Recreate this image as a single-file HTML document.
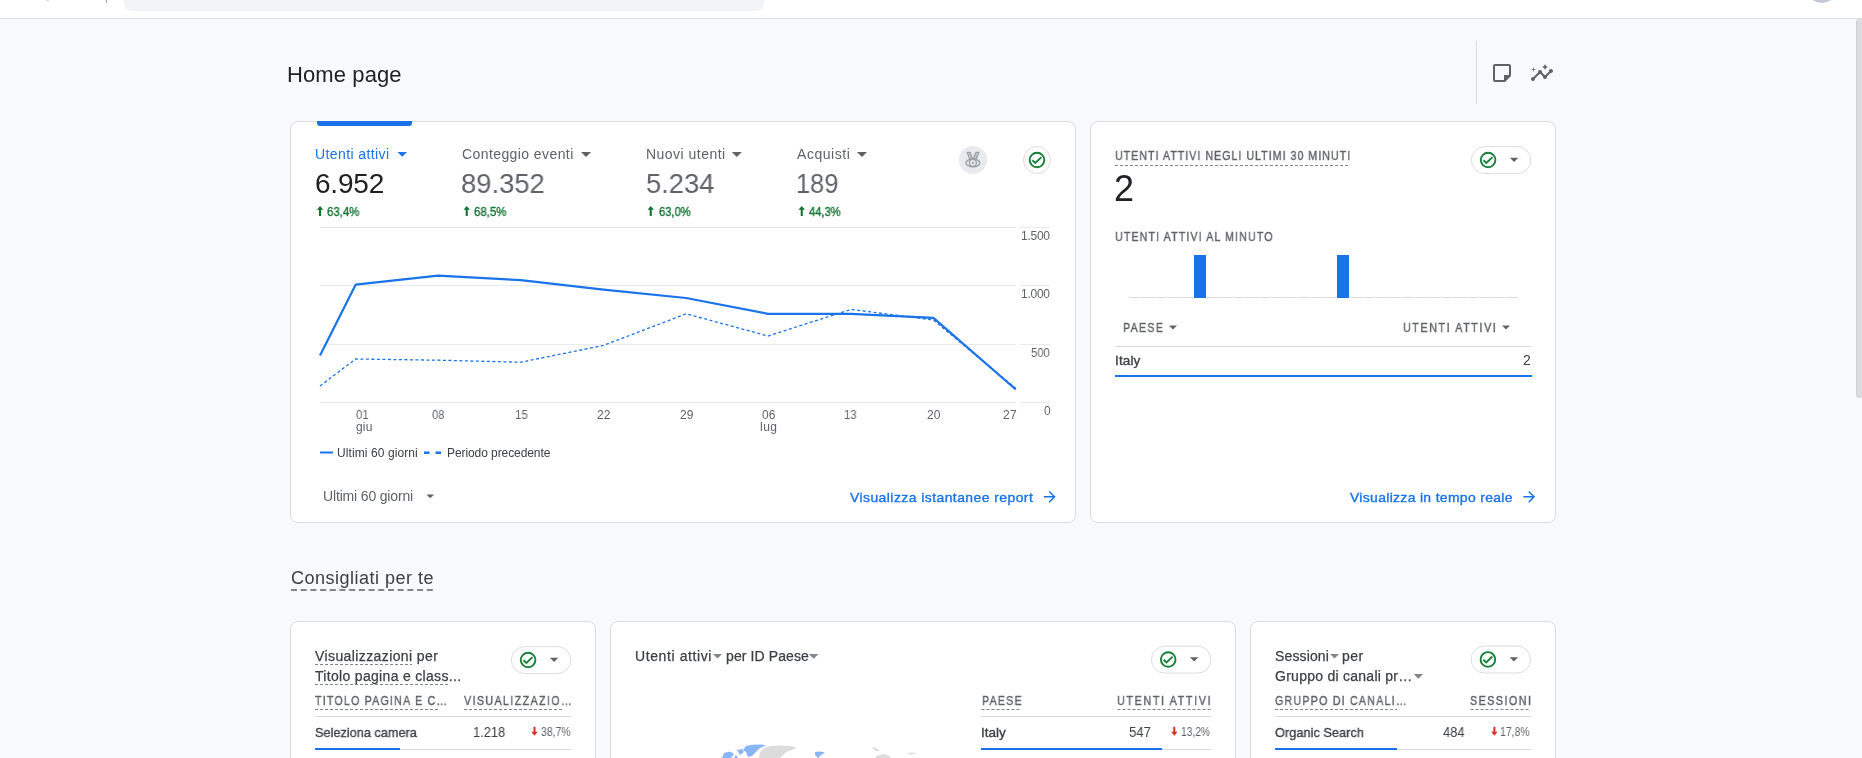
<!DOCTYPE html>
<html><head><meta charset="utf-8"><style>
*{box-sizing:border-box;margin:0;padding:0}
html,body{width:1862px;height:758px;overflow:hidden;background:#f8f9fa;font-family:"Liberation Sans",sans-serif;color:#202124}
.a{position:absolute}
.t{position:absolute;white-space:nowrap;line-height:1;will-change:transform}
#top{position:absolute;left:0;top:0;width:1862px;height:19px;background:#fff;border-bottom:1px solid #dadce0}
#search{position:absolute;left:124px;top:-30px;width:640px;height:41px;background:#f1f3f4;border-radius:8px}
#avatar{position:absolute;left:1806px;top:-29px;width:32px;height:32px;border-radius:50%;background:#c2cad3}
#sb{position:absolute;left:1856px;top:19px;width:10px;height:379px;background:#dadce0;border-radius:4px;box-shadow:inset 1px 0 0 #cdced2}
.card{position:absolute;background:#fff;border:1px solid #dadce0;border-radius:8px}
svg{position:absolute;left:0;top:0}
</style></head><body>
<div id="top"><div id="search"></div><div id="avatar"></div>
<div class="a" style="left:106px;top:0;width:1px;height:3px;background:#9aa0a6"></div><div class="a" style="left:46px;top:0;width:3px;height:1px;background:#dadce0"></div></div>
<div id="sb"></div>
<div class="a" style="left:1476px;top:41px;width:1px;height:63px;background:#dadce0"></div>
<div class="card" style="left:290px;top:121px;width:786px;height:402px"></div>
<div class="a" style="left:317px;top:121px;width:95px;height:5px;background:#1a73e8;border-radius:0 0 3px 3px"></div>
<div class="card" style="left:1090px;top:121px;width:466px;height:402px"></div>
<div class="a" style="left:1115px;top:346px;width:416px;height:1px;background:#dadce0"></div>
<div class="a" style="left:1115px;top:375px;width:417px;height:2px;background:#1a73e8"></div>
<div class="card" style="left:290px;top:621px;width:306px;height:200px"></div>
<div class="card" style="left:610px;top:621px;width:626px;height:200px"></div>
<div class="card" style="left:1250px;top:621px;width:306px;height:200px"></div>
<div class="a" style="left:315px;top:716px;width:256px;height:1px;background:#dadce0"></div>
<div class="a" style="left:315px;top:749px;width:256px;height:1px;background:#dadce0"></div>
<div class="a" style="left:315px;top:748px;width:85px;height:2px;background:#1a73e8"></div>
<div class="a" style="left:981px;top:716px;width:230px;height:1px;background:#dadce0"></div>
<div class="a" style="left:981px;top:749px;width:230px;height:1px;background:#dadce0"></div>
<div class="a" style="left:981px;top:748px;width:181px;height:2px;background:#1a73e8"></div>
<div class="a" style="left:1275px;top:716px;width:256px;height:1px;background:#dadce0"></div>
<div class="a" style="left:1275px;top:749px;width:256px;height:1px;background:#dadce0"></div>
<div class="a" style="left:1275px;top:748px;width:122px;height:2px;background:#1a73e8"></div>

<div class="t" id="home" style="left:287.2px;top:64.38px;font-size:22px;color:#202124;letter-spacing:0.103px;">Home page</div>
<div class="t" id="m1" style="left:315.2px;top:147.15px;font-size:14px;color:#1a73e8;letter-spacing:0.401px;">Utenti attivi</div>
<div class="t" id="m2" style="left:462.2px;top:147.15px;font-size:14px;color:#5f6368;letter-spacing:0.413px;">Conteggio eventi</div>
<div class="t" id="m3" style="left:645.8px;top:147.15px;font-size:14px;color:#5f6368;letter-spacing:0.473px;">Nuovi utenti</div>
<div class="t" id="m4" style="left:796.8px;top:147.15px;font-size:14px;color:#5f6368;letter-spacing:0.544px;">Acquisti</div>
<div class="t" id="v1" style="left:315.2px;top:169.7px;font-size:28px;color:#202124;letter-spacing:-0.2px;">6.952</div>
<div class="t" id="v2" style="left:461.2px;top:169.7px;font-size:28px;color:#5f6368;transform:scaleX(0.9786);transform-origin:0 0;">89.352</div>
<div class="t" id="v3" style="left:645.6px;top:169.7px;font-size:28px;color:#5f6368;transform:scaleX(0.9768);transform-origin:0 0;">5.234</div>
<div class="t" id="v4" style="left:796.2px;top:169.7px;font-size:28px;color:#5f6368;transform:scaleX(0.9054);transform-origin:0 0;">189</div>
<div class="t" id="p1" style="left:327.0px;top:205.84px;font-size:12px;color:#137333;-webkit-text-stroke:0.35px currentColor;transform:scaleX(0.953);transform-origin:0 0;">63,4%</div>
<div class="t" id="p2" style="left:474.0px;top:205.84px;font-size:12px;color:#137333;-webkit-text-stroke:0.35px currentColor;transform:scaleX(0.953);transform-origin:0 0;">68,5%</div>
<div class="t" id="p3" style="left:658.6px;top:205.84px;font-size:12px;color:#137333;-webkit-text-stroke:0.35px currentColor;transform:scaleX(0.9298);transform-origin:0 0;">63,0%</div>
<div class="t" id="p4" style="left:809.2px;top:205.84px;font-size:12px;color:#137333;-webkit-text-stroke:0.35px currentColor;transform:scaleX(0.9295);transform-origin:0 0;">44,3%</div>
<div class="t" id="y1" style="left:1021.0px;top:229.54px;font-size:12px;color:#5f6368;letter-spacing:-0.25px;">1.500</div>
<div class="t" id="y2" style="left:1021.0px;top:288.24px;font-size:12px;color:#5f6368;letter-spacing:-0.25px;">1.000</div>
<div class="t" id="y3" style="left:1031.2px;top:346.84px;font-size:12px;color:#5f6368;transform:scaleX(0.9391);transform-origin:0 0;">500</div>
<div class="t" id="y4" style="left:1043.8px;top:404.84px;font-size:12px;color:#5f6368;">0</div>
<div class="t" id="x1" style="left:356.2px;top:408.64px;font-size:12px;color:#5f6368;transform:scaleX(0.9396);transform-origin:0 0;">01</div>
<div class="t" id="x1b" style="left:356.2px;top:420.84px;font-size:12px;color:#5f6368;letter-spacing:0.2px;">giu</div>
<div class="t" id="x2" style="left:432.2px;top:408.64px;font-size:12px;color:#5f6368;transform:scaleX(0.9245);transform-origin:0 0;">08</div>
<div class="t" id="x3" style="left:515.0px;top:408.64px;font-size:12px;color:#5f6368;transform:scaleX(0.9548);transform-origin:0 0;">15</div>
<div class="t" id="x4" style="left:596.6px;top:408.64px;font-size:12px;color:#5f6368;transform:scaleX(0.9885);transform-origin:0 0;">22</div>
<div class="t" id="x5" style="left:680.0px;top:408.64px;font-size:12px;color:#5f6368;">29</div>
<div class="t" id="x6" style="left:761.6px;top:408.64px;font-size:12px;color:#5f6368;transform:scaleX(0.971);transform-origin:0 0;">06</div>
<div class="t" id="x6b" style="left:760.2px;top:420.84px;font-size:12px;color:#5f6368;letter-spacing:0.5px;">lug</div>
<div class="t" id="x7" style="left:844.4px;top:408.64px;font-size:12px;color:#5f6368;transform:scaleX(0.9399);transform-origin:0 0;">13</div>
<div class="t" id="x8" style="left:926.8px;top:408.64px;font-size:12px;color:#5f6368;transform:scaleX(0.9706);transform-origin:0 0;">20</div>
<div class="t" id="x9" style="left:1002.8px;top:408.64px;font-size:12px;color:#5f6368;letter-spacing:0.4px;">27</div>
<div class="t" id="leg1" style="left:336.8px;top:447.34px;font-size:12px;color:#3c4043;letter-spacing:0.093px;">Ultimi 60 giorni</div>
<div class="t" id="leg2" style="left:447.0px;top:447.34px;font-size:12px;color:#3c4043;letter-spacing:-0.082px;">Periodo precedente</div>
<div class="t" id="dd" style="left:322.8px;top:488.65px;font-size:14px;color:#5f6368;letter-spacing:-0.161px;">Ultimi 60 giorni</div>
<div class="t" id="lnk1" style="left:849.6px;top:490.5px;font-size:13px;color:#1a73e8;-webkit-text-stroke:0.35px currentColor;letter-spacing:0.422px;transform:scaleX(1.07);transform-origin:0 0;">Visualizza istantanee report</div>
<div class="t" id="rt1" style="left:1115.0px;top:149.4px;font-size:13px;color:#5f6368;-webkit-text-stroke:0.4px currentColor;letter-spacing:1.233px;transform:scaleX(0.82);transform-origin:0 0;">UTENTI ATTIVI NEGLI ULTIMI 30 MINUTI</div>
<div class="t" id="rt2" style="left:1114.2px;top:171.03px;font-size:36px;color:#202124;">2</div>
<div class="t" id="rt3" style="left:1115.0px;top:230.3px;font-size:13px;color:#5f6368;-webkit-text-stroke:0.4px currentColor;letter-spacing:1.355px;transform:scaleX(0.82);transform-origin:0 0;">UTENTI ATTIVI AL MINUTO</div>
<div class="t" id="rt4" style="left:1123.0px;top:320.6px;font-size:13px;color:#5f6368;-webkit-text-stroke:0.4px currentColor;letter-spacing:1.542px;transform:scaleX(0.82);transform-origin:0 0;">PAESE</div>
<div class="t" id="rt5" style="left:1403.0px;top:320.6px;font-size:13px;color:#5f6368;-webkit-text-stroke:0.4px currentColor;letter-spacing:1.986px;transform:scaleX(0.82);transform-origin:0 0;">UTENTI ATTIVI</div>
<div class="t" id="rt6" style="left:1114.6px;top:353.77px;font-size:13.5px;color:#3c4043;-webkit-text-stroke:0.35px currentColor;letter-spacing:0.15px;">Italy</div>
<div class="t" id="rt7" style="left:1523.0px;top:353.35px;font-size:14px;color:#3c4043;">2</div>
<div class="t" id="lnk2" style="left:1350.0px;top:490.5px;font-size:13px;color:#1a73e8;-webkit-text-stroke:0.35px currentColor;letter-spacing:0.314px;transform:scaleX(1.07);transform-origin:0 0;">Visualizza in tempo reale</div>
<div class="t" id="cons" style="left:291.0px;top:569.06px;font-size:18px;color:#3c4043;letter-spacing:0.496px;">Consigliati per te</div>
<div class="t" id="a1" style="left:315.2px;top:649.25px;font-size:14px;color:#3c4043;-webkit-text-stroke:0.25px currentColor;letter-spacing:0.397px;">Visualizzazioni per</div>
<div class="t" id="a2" style="left:315.2px;top:669.35px;font-size:14px;color:#3c4043;-webkit-text-stroke:0.25px currentColor;letter-spacing:0.315px;">Titolo pagina e class...</div>
<div class="t" id="a3" style="left:315.0px;top:693.5px;font-size:13px;color:#5f6368;-webkit-text-stroke:0.4px currentColor;letter-spacing:1.47px;transform:scaleX(0.82);transform-origin:0 0;">TITOLO PAGINA E C…</div>
<div class="t" id="a4" style="left:464.0px;top:693.5px;font-size:13px;color:#5f6368;-webkit-text-stroke:0.4px currentColor;letter-spacing:1.71px;transform:scaleX(0.82);transform-origin:0 0;">VISUALIZZAZIO…</div>
<div class="t" id="a5" style="left:315.2px;top:725.77px;font-size:13.5px;color:#3c4043;-webkit-text-stroke:0.35px currentColor;transform:scaleX(0.9431);transform-origin:0 0;">Seleziona camera</div>
<div class="t" id="a6" style="left:473.0px;top:725.25px;font-size:14px;color:#3c4043;transform:scaleX(0.9186);transform-origin:0 0;">1.218</div>
<div class="t" id="a7" style="left:541.0px;top:725.94px;font-size:12px;color:#5f6368;transform:scaleX(0.8717);transform-origin:0 0;">38,7%</div>
<div class="t" id="b1" style="left:635.4px;top:649.05px;font-size:14px;color:#3c4043;-webkit-text-stroke:0.25px currentColor;letter-spacing:0.601px;">Utenti attivi</div>
<div class="t" id="b2" style="left:725.6px;top:649.05px;font-size:14px;color:#3c4043;-webkit-text-stroke:0.25px currentColor;letter-spacing:0.108px;">per ID Paese</div>
<div class="t" id="b3" style="left:982.0px;top:693.5px;font-size:13px;color:#5f6368;-webkit-text-stroke:0.4px currentColor;letter-spacing:1.497px;transform:scaleX(0.82);transform-origin:0 0;">PAESE</div>
<div class="t" id="b4" style="left:1117.0px;top:693.5px;font-size:13px;color:#5f6368;-webkit-text-stroke:0.4px currentColor;letter-spacing:2.069px;transform:scaleX(0.82);transform-origin:0 0;">UTENTI ATTIVI</div>
<div class="t" id="b5" style="left:980.8px;top:725.77px;font-size:13.5px;color:#3c4043;-webkit-text-stroke:0.35px currentColor;">Italy</div>
<div class="t" id="b6" style="left:1129.4px;top:725.35px;font-size:14px;color:#3c4043;transform:scaleX(0.9399);transform-origin:0 0;">547</div>
<div class="t" id="b7" style="left:1181.0px;top:725.94px;font-size:12px;color:#5f6368;transform:scaleX(0.8515);transform-origin:0 0;">13,2%</div>
<div class="t" id="c1" style="left:1275.0px;top:649.05px;font-size:14px;color:#3c4043;-webkit-text-stroke:0.25px currentColor;letter-spacing:0.142px;">Sessioni</div>
<div class="t" id="c2" style="left:1341.7px;top:649.05px;font-size:14px;color:#3c4043;-webkit-text-stroke:0.25px currentColor;letter-spacing:0.5px;">per</div>
<div class="t" id="c3" style="left:1275.0px;top:669.05px;font-size:14px;color:#3c4043;-webkit-text-stroke:0.25px currentColor;letter-spacing:0.263px;">Gruppo di canali pr…</div>
<div class="t" id="c4" style="left:1275.0px;top:693.5px;font-size:13px;color:#5f6368;-webkit-text-stroke:0.4px currentColor;letter-spacing:1.491px;transform:scaleX(0.82);transform-origin:0 0;">GRUPPO DI CANALI…</div>
<div class="t" id="c5" style="left:1470.0px;top:693.5px;font-size:13px;color:#5f6368;-webkit-text-stroke:0.4px currentColor;letter-spacing:1.847px;transform:scaleX(0.82);transform-origin:0 0;">SESSIONI</div>
<div class="t" id="c6" style="left:1275.0px;top:725.57px;font-size:13.5px;color:#3c4043;-webkit-text-stroke:0.35px currentColor;transform:scaleX(0.9484);transform-origin:0 0;">Organic Search</div>
<div class="t" id="c7" style="left:1443.2px;top:725.35px;font-size:14px;color:#3c4043;transform:scaleX(0.9254);transform-origin:0 0;">484</div>
<div class="t" id="c8" style="left:1500.0px;top:725.94px;font-size:12px;color:#5f6368;transform:scaleX(0.8702);transform-origin:0 0;">17,8%</div>
<svg width="1862" height="758" viewBox="0 0 1862 758">
<g transform="translate(1490,61)" fill="#5f6368"><path fill-rule="evenodd" d="M5,3H19a2,2 0 0 1 2,2V15L15,21H5a2,2 0 0 1 -2,-2V5a2,2 0 0 1 2,-2ZM5,5V19H14V14H19V5Z"/></g>
<g transform="translate(1530,61)" fill="#5f6368"><path d="M21 8c-1.450 0-2.26 1.44-1.93 2.51l-3.55 3.56c-.3-.09-.74-.09-1.04 0l-2.55-2.55C12.27 10.45 11.46 9 10 9c-1.45 0-2.27 1.44-1.930 2.52l-4.56 4.55C2.440 15.74 1 16.55 1 18c0 1.1.9 2 2 2 1.45 0 2.26-1.44 1.93-2.51l4.55-4.56c.3.09.74.09 1.04 0l2.55 2.55C12.73 16.55 13.54 18 15 18c1.45 0 2.27-1.44 1.93-2.52l3.56-3.55c1.07.33 2.51-.48 2.51-1.930 0-1.1-.9-2-2-2z M15 9l.94-2.07L18 6l-2.06-.93L15 3l-.92 2.07L12 6l2.08.93z M3.5 11L4 9l2-.5L4 8l-.5-2L3 8l-2 .5L3 9z"/></g>
<line x1="320" y1="227.5" x2="1016" y2="227.5" stroke="#e8eaed" stroke-width="1"/>
<line x1="1020" y1="227.5" x2="1050" y2="227.5" stroke="#e8eaed" stroke-width="1"/>
<line x1="320" y1="285.5" x2="1016" y2="285.5" stroke="#e8eaed" stroke-width="1"/>
<line x1="1020" y1="285.5" x2="1050" y2="285.5" stroke="#e8eaed" stroke-width="1"/>
<line x1="320" y1="344.5" x2="1016" y2="344.5" stroke="#e8eaed" stroke-width="1"/>
<line x1="1020" y1="344.5" x2="1050" y2="344.5" stroke="#e8eaed" stroke-width="1"/>
<line x1="320" y1="402.5" x2="1016" y2="402.5" stroke="#e8eaed" stroke-width="1"/>
<line x1="1020" y1="402.5" x2="1050" y2="402.5" stroke="#e8eaed" stroke-width="1"/>
<polyline points="320,386 355.6,359 438,360.2 520.8,362.2 603.5,345.4 686.2,313.8 768,336 851.3,309.4 933.4,320 1015.8,388.4" fill="none" stroke="#1a73e8" stroke-width="1.3" stroke-dasharray="3,2.5"/>
<polyline points="320,355.5 355.6,284.7 438,275.7 520.8,280.1 603.5,289.7 686,298 768,313.8 851.3,313.8 933.4,317.8 1015.8,389.5" fill="none" stroke="#1a73e8" stroke-width="2.2" stroke-linejoin="round"/>
<rect x="320" y="451.5" width="13" height="2" fill="#1a73e8"/>
<rect x="424" y="451.5" width="5.5" height="2.5" fill="#1a73e8"/><rect x="435.5" y="451.5" width="5.5" height="2.5" fill="#1a73e8"/>
<polygon points="397.5,152 407,152 402.25,156.75" fill="#1a73e8"/>
<polygon points="581,152 591,152 586.0,157.0" fill="#5f6368"/>
<polygon points="731.8,152 741.8,152 736.8,157.0" fill="#5f6368"/>
<polygon points="857,152 867,152 862.0,157.0" fill="#5f6368"/>
<path d="M316.8,209.8 L320.05,206 L323.3,209.8 Z M319.0,209 H321.1 V216 H319.0 Z" fill="#137333"/>
<path d="M463.5,209.8 L466.75,206 L470.0,209.8 Z M465.7,209 H467.8 V216 H465.7 Z" fill="#137333"/>
<path d="M647.5,209.8 L650.75,206 L654.0,209.8 Z M649.7,209 H651.8 V216 H649.7 Z" fill="#137333"/>
<path d="M798.5,209.8 L801.75,206 L805.0,209.8 Z M800.7,209 H802.8 V216 H800.7 Z" fill="#137333"/>
<circle cx="973" cy="160" r="14" fill="#e8eaed"/>
<g fill="#c5c8cc" stroke="#9aa0a6" stroke-width="1.2" stroke-linejoin="round"><path d="M967.2,152.4 H970.2 L972.4,158.2 L970.0,159.2 Z"/><path d="M978.8,152.4 H975.8 L973.6,158.2 L976.0,159.2 Z"/></g>
<g fill="#e8eaed" stroke="#9aa0a6" stroke-width="1.4"><ellipse cx="972.9" cy="162.8" rx="6.9" ry="3.9"/><circle cx="972.9" cy="162.8" r="3.5"/></g><circle cx="972.9" cy="162.8" r="1.1" fill="#9aa0a6"/>
<circle cx="1037" cy="160" r="13.5" fill="#fff" stroke="#dadce0" stroke-width="1"/>
<circle cx="1037" cy="160" r="7.3" fill="none" stroke="#188038" stroke-width="1.9"/><polyline points="1032.4,160.3 1035.3,163.0 1041.4,157.1" fill="none" stroke="#188038" stroke-width="1.9"/>
<rect x="1471.3" y="146.6" width="59.5" height="27" rx="13.5" fill="#fff" stroke="#dadce0" stroke-width="1"/>
<circle cx="1488.1" cy="160.0" r="7.3" fill="none" stroke="#188038" stroke-width="1.9"/><polyline points="1483.5,160.3 1486.3999999999999,163.0 1492.5,157.1" fill="none" stroke="#188038" stroke-width="1.9"/>
<polygon points="1509.8,157.8 1518.3,157.8 1514.05,162.05" fill="#5f6368"/>
<rect x="511.3" y="646.6" width="59.5" height="27" rx="13.5" fill="#fff" stroke="#dadce0" stroke-width="1"/>
<circle cx="528.1" cy="660.0" r="7.3" fill="none" stroke="#188038" stroke-width="1.9"/><polyline points="523.5,660.3 526.4,663.0 532.5,657.1" fill="none" stroke="#188038" stroke-width="1.9"/>
<polygon points="549.8,657.8 558.3,657.8 554.05,662.05" fill="#5f6368"/>
<rect x="1151.4" y="646.1" width="59.5" height="27" rx="13.5" fill="#fff" stroke="#dadce0" stroke-width="1"/>
<circle cx="1168.2" cy="659.5" r="7.3" fill="none" stroke="#188038" stroke-width="1.9"/><polyline points="1163.6000000000001,659.8 1166.5,662.5 1172.6000000000001,656.6" fill="none" stroke="#188038" stroke-width="1.9"/>
<polygon points="1189.9,657.3 1198.4,657.3 1194.15,661.55" fill="#5f6368"/>
<rect x="1471.1" y="646" width="59.5" height="27" rx="13.5" fill="#fff" stroke="#dadce0" stroke-width="1"/>
<circle cx="1487.9" cy="659.4" r="7.3" fill="none" stroke="#188038" stroke-width="1.9"/><polyline points="1483.3000000000002,659.6999999999999 1486.2,662.4 1492.3000000000002,656.5" fill="none" stroke="#188038" stroke-width="1.9"/>
<polygon points="1509.6,657.2 1518.1,657.2 1513.85,661.45" fill="#5f6368"/>
<rect x="1129" y="297" width="12" height="1" fill="#dadce0"/>
<rect x="1142" y="297" width="12" height="1" fill="#dadce0"/>
<rect x="1155" y="297" width="12" height="1" fill="#dadce0"/>
<rect x="1168" y="297" width="12" height="1" fill="#dadce0"/>
<rect x="1181" y="297" width="12" height="1" fill="#dadce0"/>
<rect x="1194" y="255" width="12" height="43" fill="#1a73e8"/>
<rect x="1207" y="297" width="12" height="1" fill="#dadce0"/>
<rect x="1220" y="297" width="12" height="1" fill="#dadce0"/>
<rect x="1233" y="297" width="12" height="1" fill="#dadce0"/>
<rect x="1246" y="297" width="12" height="1" fill="#dadce0"/>
<rect x="1259" y="297" width="12" height="1" fill="#dadce0"/>
<rect x="1272" y="297" width="12" height="1" fill="#dadce0"/>
<rect x="1285" y="297" width="12" height="1" fill="#dadce0"/>
<rect x="1298" y="297" width="12" height="1" fill="#dadce0"/>
<rect x="1311" y="297" width="12" height="1" fill="#dadce0"/>
<rect x="1324" y="297" width="12" height="1" fill="#dadce0"/>
<rect x="1337" y="255" width="12" height="43" fill="#1a73e8"/>
<rect x="1350" y="297" width="12" height="1" fill="#dadce0"/>
<rect x="1363" y="297" width="12" height="1" fill="#dadce0"/>
<rect x="1376" y="297" width="12" height="1" fill="#dadce0"/>
<rect x="1389" y="297" width="12" height="1" fill="#dadce0"/>
<rect x="1402" y="297" width="12" height="1" fill="#dadce0"/>
<rect x="1415" y="297" width="12" height="1" fill="#dadce0"/>
<rect x="1428" y="297" width="12" height="1" fill="#dadce0"/>
<rect x="1441" y="297" width="12" height="1" fill="#dadce0"/>
<rect x="1454" y="297" width="12" height="1" fill="#dadce0"/>
<rect x="1467" y="297" width="12" height="1" fill="#dadce0"/>
<rect x="1480" y="297" width="12" height="1" fill="#dadce0"/>
<rect x="1493" y="297" width="12" height="1" fill="#dadce0"/>
<rect x="1506" y="297" width="12" height="1" fill="#dadce0"/>
<polygon points="1169,325.5 1177,325.5 1173.0,329.5" fill="#5f6368"/>
<polygon points="1502,325.5 1510,325.5 1506.0,329.5" fill="#5f6368"/>
<g transform="translate(1040.84,487.92) scale(0.74)" fill="#1a73e8"><path d="M12 4l-1.41 1.41L16.17 11H4v2h12.17l-5.58 5.59L12 20l8-8z"/></g>
<g transform="translate(1520.34,487.92) scale(0.74)" fill="#1a73e8"><path d="M12 4l-1.41 1.41L16.17 11H4v2h12.17l-5.58 5.59L12 20l8-8z"/></g>
<polygon points="426.5,494.5 434,494.5 430.25,498.25" fill="#5f6368"/>
<path d="M533.5,726.8 H535.5 V732.3 H533.5 Z M531.3,731.8 L537.7,731.8 L534.5,735.8 Z" fill="#d93025"/>
<path d="M1173.3,726.8 H1175.3 V732.3 H1173.3 Z M1171.1,731.8 L1177.5,731.8 L1174.3,735.8 Z" fill="#d93025"/>
<path d="M1493.4,726.8 H1495.4 V732.3 H1493.4 Z M1491.2,731.8 L1497.6000000000001,731.8 L1494.4,735.8 Z" fill="#d93025"/>
<polygon points="713,654 722,654 717.5,658.5" fill="#80868b"/>
<polygon points="808.8,654 818.5,654 813.65,658.85" fill="#80868b"/>
<polygon points="1330,654 1339,654 1334.5,658.5" fill="#80868b"/>
<polygon points="1413.7,674 1423,674 1418.35,678.65" fill="#80868b"/>
<line x1="1115" y1="165.5" x2="1350" y2="165.5" stroke="#80868b" stroke-width="1" stroke-dasharray="3,2"/>
<line x1="291" y1="590" x2="433" y2="590" stroke="#80868b" stroke-width="1.8" stroke-dasharray="6,3.7"/>
<line x1="315" y1="664.5" x2="412" y2="664.5" stroke="#80868b" stroke-width="1" stroke-dasharray="3,2"/>
<line x1="315" y1="684.5" x2="450" y2="684.5" stroke="#80868b" stroke-width="1" stroke-dasharray="3,2"/>
<line x1="315" y1="709.5" x2="438" y2="709.5" stroke="#80868b" stroke-width="1" stroke-dasharray="3,2"/>
<line x1="464" y1="709.5" x2="562" y2="709.5" stroke="#80868b" stroke-width="1" stroke-dasharray="3,2"/>
<line x1="981.5" y1="709.5" x2="1021" y2="709.5" stroke="#80868b" stroke-width="1" stroke-dasharray="3,2"/>
<line x1="1117.5" y1="709.5" x2="1210.5" y2="709.5" stroke="#80868b" stroke-width="1" stroke-dasharray="3,2"/>
<line x1="1275" y1="709.5" x2="1397" y2="709.5" stroke="#80868b" stroke-width="1" stroke-dasharray="3,2"/>
<line x1="1470.5" y1="709.5" x2="1530.5" y2="709.5" stroke="#80868b" stroke-width="1" stroke-dasharray="3,2"/>
<g fill="#8ab4f8"><path d="M746,746 L752,744.8 L762,744.6 L766,745.5 L760,748 L756,752 L752,756 L748,757 L746,752 L743,750 Z"/><path d="M724,753 L730,751.5 L734,754 L731,758 L722,758 Z"/><path d="M737,750 L742,749 L744,752 L740,755 Z"/><path d="M815,752 L820,751.5 L825,752.5 L821,755 L818,758 L815,755 Z"/><circle cx="736" cy="757" r="1.5"/></g>
<g fill="#dcdcdc"><path d="M759,758 L760,752 L764,748 L770,746 L780,745.5 L790,746 L797,748 L792,750 L786,752 L780,758 Z"/><path d="M871,747 L876,748 L880,751 L876,751 Z"/><path d="M876,756 L884,754 L890,756 L890,758 L876,758 Z"/><path d="M907,753 L913,752.5 L917,753.5 L910,754.5 Z"/></g>
</svg>
</body></html>
